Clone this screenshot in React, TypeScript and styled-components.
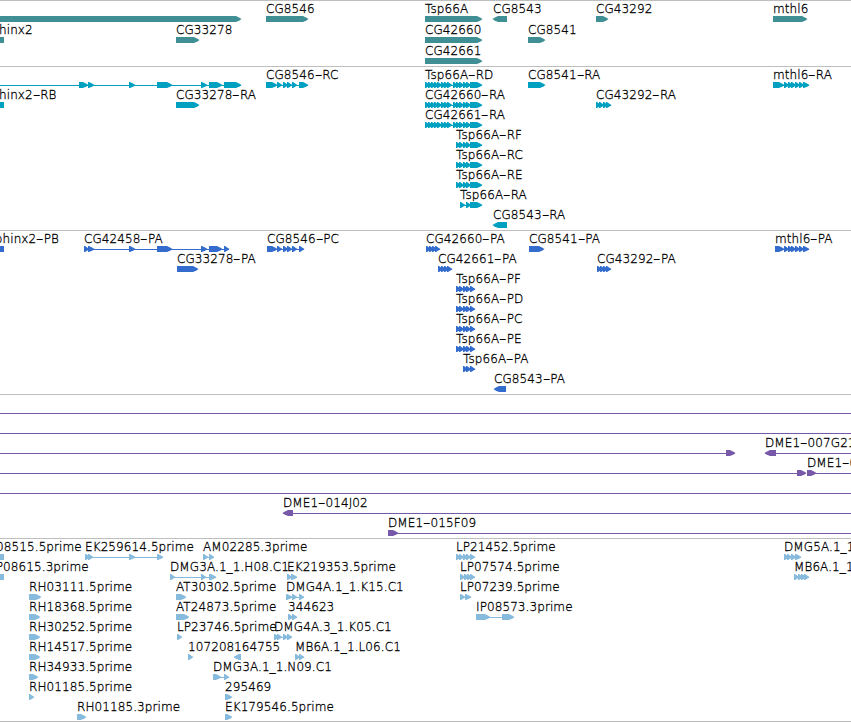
import React from 'react';
import styled, { createGlobalStyle } from 'styled-components';

type Span = [number, number];

interface FeatureData {
  label?: string;
  // label start, when it differs from the first exon
  labelX?: number;
  exons: Span[];
  line?: Span;
  reverse?: boolean;
}

interface TrackData {
  name: string;
  color: string;
  rowHeight: number;
  gap: number;
  rows: FeatureData[][];
}

const VIEW_WIDTH = 851;

const f = (label: string, ...exons: Span[]): FeatureData => ({ label, exons });
const rev = (label: string, ...exons: Span[]): FeatureData => ({ label, exons, reverse: true });
const joined = (label: string, ...exons: Span[]): FeatureData => ({
  label,
  exons,
  line: [exons[0][0], exons[exons.length - 1][1]],
});
const through: FeatureData = { exons: [], line: [0, VIEW_WIDTH] };

const tspLong: Span[] = [
  [425, 430], [428, 433], [431, 436], [434, 439], [437, 442], [441, 446], [444, 449], [447, 452],
  [453, 458], [456, 461], [459, 464], [463, 468], [466, 471], [470, 482],
];
const tspMid: Span[] = [[456, 461], [459, 464], [463, 468], [466, 471], [470, 482]];
const tspProtein: Span[] = [[456, 461], [459, 464], [463, 468], [466, 471], [470, 475]];
const mthlTail: Span[] = [[784, 789], [788, 793], [791, 796], [795, 800], [799, 804], [803, 809]];

const tracks: TrackData[] = [
  {
    name: 'gene',
    color: '#3f8f94',
    rowHeight: 21,
    gap: 2,
    rows: [
      [
        { exons: [[-10, 241]] },
        f('CG8546', [266, 308]),
        f('Tsp66A', [425, 482]),
        rev('CG8543', [493, 507]),
        f('CG43292', [596, 608]),
        f('mthl6', [773, 807]),
      ],
      [
        { label: 'sphinx2', labelX: -15, exons: [[-20, 4]], reverse: true },
        f('CG33278', [176, 199]),
        f('CG42660', [425, 482]),
        f('CG8541', [528, 545]),
      ],
      [f('CG42661', [425, 482])],
    ],
  },
  {
    name: 'mRNA',
    color: '#00a0c1',
    rowHeight: 20,
    gap: 3,
    rows: [
      [
        {
          exons: [[79, 88], [88, 94], [129, 135], [157, 172], [201, 207], [209, 222], [224, 241]],
          line: [0, 241],
        },
        joined('CG8546-RC', [266, 277], [277, 282], [283, 288], [287, 292], [292, 297], [299, 308]),
        joined('Tsp66A-RD', ...tspLong),
        f('CG8541-RA', [528, 545]),
        joined('mthl6-RA', [773, 784], ...mthlTail),
      ],
      [
        { label: 'sphinx2-RB', labelX: -15, exons: [[-20, 4]], reverse: true },
        f('CG33278-RA', [176, 199]),
        joined('CG42660-RA', ...tspLong),
        joined('CG43292-RA', [596, 601], [599, 604], [603, 608], [606, 611]),
      ],
      [joined('CG42661-RA', ...tspLong)],
      [joined('Tsp66A-RF', ...tspMid)],
      [joined('Tsp66A-RC', ...tspMid)],
      [joined('Tsp66A-RE', ...tspMid)],
      [joined('Tsp66A-RA', [460, 465], [466, 471], [470, 482])],
      [rev('CG8543-RA', [493, 507])],
    ],
  },
  {
    name: 'CDS',
    color: '#336ccc',
    rowHeight: 20,
    gap: 3,
    rows: [
      [
        { label: 'sphinx2-PB', labelX: -11.5, exons: [[-20, 4]], reverse: true },
        joined('CG42458-PA', [84, 89], [88, 94], [129, 135], [157, 172], [201, 207], [209, 222], [224, 229]),
        joined('CG8546-PC', [267, 277], [277, 282], [283, 288], [287, 292], [292, 297], [299, 304]),
        joined('CG42660-PA', [426, 431], [429, 434], [432, 437], [435, 440]),
        f('CG8541-PA', [529, 544]),
        joined('mthl6-PA', [775, 784], ...mthlTail),
      ],
      [
        f('CG33278-PA', [177, 198]),
        joined('CG42661-PA', [438, 443], [441, 446], [444, 449], [447, 452]),
        joined('CG43292-PA', [597, 602], [600, 605], [603, 608], [606, 611]),
      ],
      [joined('Tsp66A-PF', ...tspProtein)],
      [joined('Tsp66A-PD', ...tspProtein)],
      [joined('Tsp66A-PC', ...tspProtein)],
      [joined('Tsp66A-PE', ...tspProtein)],
      [joined('Tsp66A-PA', [463, 468], [466, 471], [470, 475])],
      [rev('CG8543-PA', [494, 506])],
    ],
  },
  {
    name: 'BAC',
    color: '#7858a8',
    rowHeight: 20,
    gap: 3,
    rows: [
      [through],
      [through],
      [
        { exons: [[726, 735]], line: [0, 735] },
        { label: 'DME1-007G21', exons: [[765, 776]], line: [765, VIEW_WIDTH], reverse: true },
      ],
      [
        { exons: [[797, 806]], line: [0, 806] },
        { label: 'DME1-018A05', exons: [[807, 816]], line: [807, VIEW_WIDTH] },
      ],
      [through],
      [{ label: 'DME1-014J02', exons: [[283, 293]], line: [283, VIEW_WIDTH], reverse: true }],
      [{ label: 'DME1-015F09', exons: [[388, 398]], line: [388, VIEW_WIDTH] }],
    ],
  },
  {
    name: 'EST',
    color: '#87bbdd',
    rowHeight: 20,
    gap: 2,
    rows: [
      [
        { label: 'LP08515.5prime', labelX: -18, exons: [[-20, 4]], reverse: true },
        joined('EK259614.5prime', [85, 90], [88, 93], [129, 135], [157, 163]),
        joined('AM02285.3prime', [203, 208], [209, 214]),
        joined('LP21452.5prime', [456, 461], [459, 464], [463, 468], [466, 471], [470, 475]),
        joined('DMG5A.1_1.D07.C1', [784, 789], [787, 792], [791, 796], [795, 801]),
      ],
      [
        { label: 'LP08615.3prime', labelX: -11, exons: [[-20, 4]], reverse: true },
        joined('DMG3A.1_1.H08.C1', [170, 175], [201, 206], [209, 216]),
        joined('EK219353.5prime', [287, 292], [291, 297]),
        joined('LP07574.5prime', [460, 465], [464, 469], [467, 472], [470, 475]),
        joined('MB6A.1_1.G10.C1', [794, 799], [798, 803], [801, 806], [804, 809]),
      ],
      [
        f('RH03111.5prime', [29, 41]),
        f('AT30302.5prime', [176, 186]),
        joined('DMG4A.1_1.K15.C1', [286, 292], [292, 297], [299, 304]),
        joined('LP07239.5prime', [460, 465], [465, 471]),
      ],
      [
        f('RH18368.5prime', [29, 40]),
        f('AT24873.5prime', [176, 189]),
        joined('344623', [288, 293], [292, 297]),
        joined('IP08573.3prime', [476, 490], [502, 514]),
      ],
      [
        f('RH30252.5prime', [29, 40]),
        f('LP23746.5prime', [177, 182]),
        joined('DMG4A.3_1.K05.C1', [274, 279], [277, 282], [283, 288], [287, 292]),
      ],
      [
        f('RH14517.5prime', [29, 40]),
        f('107208', [188, 193]),
        rev('164755', [234, 241]),
        joined('MB6A.1_1.L06.C1', [295, 300], [299, 304]),
      ],
      [
        f('RH34933.5prime', [29, 38]),
        joined('DMG3A.1_1.N09.C1', [213, 221], [224, 229]),
      ],
      [f('RH01185.5prime', [29, 34]), f('295469', [225, 232])],
      [f('RH01185.3prime', [77, 86]), f('EK179546.5prime', [225, 232])],
    ],
  },
];

// block with a blunt point in its reading direction
function arrowPoints([start, end]: Span, reverse?: boolean) {
  const dir = reverse ? -1 : 1;
  const tail = reverse ? end : start;
  const tip = reverse ? start : end;
  const neck = tip - dir * Math.min(5, end - start - 1);
  const chin = tip - dir * 1.5;
  return `${tail},0 ${neck},0 ${chin},1.7 ${tip + dir * 0.5},3 ${chin},4.6 ${neck},6 ${tail},6`;
}

function FeatureLabel({ text, x }: { text: string; x: number }) {
  const [name, suffix] = text.split('-');
  return (
    <Label style={{ left: x }}>
      {name}
      {suffix && <Dash>-</Dash>}
      {suffix}
    </Label>
  );
}

function Row({ features, height }: { features: FeatureData[]; height: number }) {
  return (
    <Lane $height={height}>
      {features.map(({ label, labelX, exons }) =>
        label ? <FeatureLabel key={label} text={label} x={labelX ?? exons[0][0]} /> : null,
      )}
      <Glyphs width={VIEW_WIDTH} height={6}>
        {features.map(({ exons, line, reverse }, i) => (
          <g key={i}>
            {line && <rect x={line[0]} y={3} width={line[1] - line[0]} height={1} />}
            {exons.map(exon => (
              <polygon key={exon[0]} points={arrowPoints(exon, reverse)} />
            ))}
          </g>
        ))}
      </Glyphs>
    </Lane>
  );
}

function App() {
  return (
    <Browser>
      <GlobalStyle />
      {tracks.map(track => (
        <Track key={track.name} $color={track.color} $gap={track.gap}>
          {track.rows.map((features, i) => (
            <Row key={i} features={features} height={track.rowHeight} />
          ))}
        </Track>
      ))}
    </Browser>
  );
}

export default App;

const GlobalStyle = createGlobalStyle`
  body {
    margin: 0;
    background: #fff;
  }
`;
const Browser = styled.div`
  width: ${VIEW_WIDTH}px;
  overflow: hidden;
  border-top: 1px solid #bebebe;
  font-family: 'DejaVu Sans Light', 'DejaVu Sans', sans-serif;
  font-size: 12px;
  font-weight: 200;
  line-height: 14px;
  letter-spacing: 0.09px;
  color: #000;
  -webkit-text-stroke: 0.3px #000;
`;
const Track = styled.section<{ $color: string; $gap: number }>`
  padding-bottom: ${({ $gap }) => $gap}px;
  border-bottom: 1px solid #bebebe;
  fill: ${({ $color }) => $color};
`;
const Lane = styled.div<{ $height: number }>`
  position: relative;
  box-sizing: border-box;
  height: ${({ $height }) => $height}px;
  padding-top: 15px;
`;
// labels sit at their sequence position, so they may run into each other
const Label = styled.span`
  position: absolute;
  top: 1px;
  white-space: nowrap;
`;
const Dash = styled.span`
  display: inline-block;
  width: 7.4px;
  text-align: center;
  transform: scaleX(1.7);
`;
const Glyphs = styled.svg`
  display: block;
`;
